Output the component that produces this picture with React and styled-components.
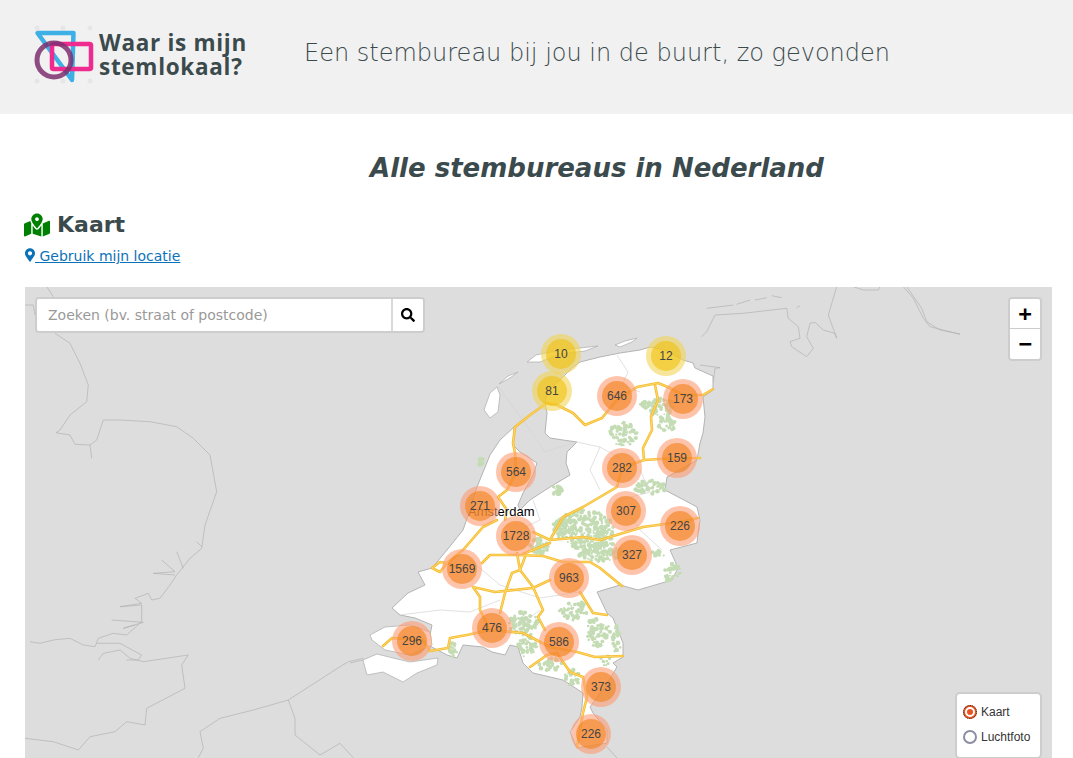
import React from 'react';
import styled, { createGlobalStyle } from 'styled-components';
import { FaMapMarkedAlt, FaMapMarkerAlt, FaSearch } from 'react-icons/fa';

const GlobalStyle = createGlobalStyle`
  html, body {
    margin: 0;
    height: 758px;
    overflow: hidden;
    background: #fff;
    font-family: "DejaVu Sans", sans-serif;
    color: #3b4a4c;
  }
`;

const Header = styled.header`
  display: flex;
  align-items: center;
  height: 114px;
  background: #f1f1f1;
  padding: 0 0 5px 30px;
  box-sizing: border-box;
`;
const Logo = styled.div`
  display: flex;
  align-items: center;
  width: 275px;
  gap: 3px;
`;
const LogoText = styled.div`
  font-family: "Open Sans", sans-serif;
  font-weight: 700;
  font-size: 22.5px;
  letter-spacing: 0.7px;
  line-height: 24px;
  color: #3b4a4c;
  white-space: nowrap;
  margin-top: 1px;
`;
const Tagline = styled.div`
  font-size: 24px;
  font-weight: 200;
  color: #3b4a4c;
  white-space: nowrap;
  margin: 0 0 4px -1px;
`;
const Content = styled.main`
  padding: 0 21px 0 25px;
`;
const Title = styled.h1`
  margin: 0;
  padding: 37px 0 0 117px;
  text-align: center;
  font-size: 26px;
  line-height: 34px;
  font-weight: bold;
  font-style: italic;
  color: #3b4a4c;
`;
const SectionTitle = styled.h2`
  display: flex;
  align-items: center;
  gap: 7px;
  margin: 24px 0 0 -1px;
  font-size: 22px;
  line-height: 32px;
  font-weight: bold;
  color: #3b4a4c;
  svg {
    color: #008000;
  }
`;
const LocationLink = styled.a`
  display: inline-block;
  margin-top: 5px;
  font-size: 14px;
  line-height: 20px;
  color: #0c72b8;
  text-decoration: underline;
  svg {
    width: 10px;
    height: 14px;
    vertical-align: -1px;
  }
`;
const MapBox = styled.div`
  position: relative;
  width: 1027px;
  height: 481px;
  margin-top: 21px;
  background: #ddd;
  overflow: hidden;
`;
const MapLayer = styled.svg`
  position: absolute;
  inset: 0;
`;
const CityLabel = styled.div`
  position: absolute;
  left: 443px;
  top: 217px;
  font-family: "Liberation Sans", sans-serif;
  font-size: 13px;
  line-height: 16px;
  color: #000;
  text-shadow: 0 0 2px #fff, 0 0 2px #fff;
`;
const Cluster = styled.div`
  position: absolute;
  width: 40px;
  height: 40px;
  margin: -20px 0 0 -20px;
  border-radius: 50%;
  display: flex;
  align-items: center;
  justify-content: center;
  background: ${(p) => (p.$mid ? 'rgba(241, 211, 87, 0.6)' : 'rgba(253, 156, 115, 0.6)')};
`;
const ClusterCore = styled.div`
  width: 30px;
  height: 30px;
  border-radius: 50%;
  text-align: center;
  font-family: "Liberation Sans", sans-serif;
  font-size: 12px;
  line-height: 30px;
  color: #444;
  background: ${(p) => (p.$mid ? 'rgba(240, 194, 12, 0.6)' : 'rgba(241, 128, 23, 0.6)')};
`;
const SearchBar = styled.div`
  position: absolute;
  left: 10px;
  top: 10px;
  display: flex;
  width: 390px;
  height: 36px;
  box-sizing: border-box;
  border: 2px solid rgba(0, 0, 0, 0.07);
  background-clip: padding-box;
  border-radius: 4px;
`;
const SearchInput = styled.input`
  width: 356px;
  box-sizing: border-box;
  border: 0;
  border-right: 2px solid #d9d9d9;
  border-radius: 2px 0 0 2px;
  padding: 0 11px;
  font-family: "DejaVu Sans", sans-serif;
  font-size: 14px;
  outline: none;
  &::placeholder {
    color: #999;
    opacity: 1;
  }
`;
const SearchButton = styled.button`
  flex: 1;
  display: flex;
  align-items: center;
  justify-content: center;
  border: 0;
  padding: 0;
  background: #fff;
  border-radius: 0 2px 2px 0;
  color: #000;
  font-size: 14px;
`;
const ZoomBar = styled.div`
  position: absolute;
  right: 10px;
  top: 10px;
  width: 30px;
  border: 2px solid rgba(0, 0, 0, 0.07);
  background-clip: padding-box;
  border-radius: 4px;
`;
const ZoomButton = styled.a`
  display: block;
  height: 30px;
  text-align: center;
  background: #fff;
  color: #000;
  font-family: "DejaVu Sans Mono", monospace;
  font-weight: bold;
  font-size: 22px;
  line-height: 30px;
  border-radius: ${(p) => (p.$first ? '2px 2px 0 0' : '0 0 2px 2px')};
  border-bottom: ${(p) => (p.$first ? '1px solid #ccc' : '0')};
  box-sizing: border-box;
`;
const LayerPanel = styled.div`
  position: absolute;
  right: 10px;
  bottom: 9px;
  width: 87px;
  height: 67px;
  box-sizing: border-box;
  display: flex;
  flex-direction: column;
  gap: 11px;
  padding: 11px 0 0 6px;
  background: #fff;
  background-clip: padding-box;
  border: 2px solid rgba(0, 0, 0, 0.07);
  border-radius: 5px;
`;
const LayerRow = styled.label`
  display: flex;
  align-items: center;
  gap: 4px;
  height: 14px;
  font-family: "Liberation Sans", sans-serif;
  font-size: 12px;
  color: #333;
`;
const Radio = styled.span`
  position: relative;
  width: 14px;
  height: 14px;
  box-sizing: border-box;
  border-radius: 50%;
  border: 2px solid ${(p) => (p.$on ? '#e9531f' : '#8d8da3')};
  outline: ${(p) => (p.$on ? '1px dotted #333' : '0')};
  outline-offset: -1px;
  background: #fff;
  &::after {
    content: '';
    display: ${(p) => (p.$on ? 'block' : 'none')};
    position: absolute;
    inset: 2px;
    border-radius: 50%;
    background: #e9531f;
  }
`;

const toPath = (pts, close) =>
  'M' + pts.map((p) => p.join(' ')).join('L') + (close ? 'Z' : '');

// coordinates below are page pixels, the svg viewBox lines them up with the map box
const mainland = [
  [514,427],[513,445],[520,452],[537,463],[533,475],[523,493],[518,505],[520,510],[530,500],[550,487],[570,475],[566,463],[567,452],[577,442],[563,440],[550,438],[545,433],[547,413],[545,403],[548,390],[560,380],[572,368],[580,362],[600,357],[620,353],[640,350],[650,347],[665,350],[683,360],[693,363],[695,368],[713,376],[713,390],[703,397],[705,417],[703,433],[700,443],[697,460],[667,477],[665,490],[697,507],[700,520],[698,533],[697,543],[670,550],[678,568],[672,580],[638,590],[620,585],[597,592],[607,613],[613,618],[623,643],[623,657],[613,663],[617,667],[606,685],[590,707],[593,713],[607,730],[607,743],[577,748],[570,732],[580,717],[582,707],[583,693],[563,680],[533,673],[523,663],[518,647],[510,645],[505,655],[492,652],[483,647],[463,645],[457,658],[447,655],[428,645],[432,625],[415,618],[400,615],[392,608],[408,593],[425,585],[418,572],[432,568],[447,550],[463,530],[470,510],[477,487],[490,455],[500,440],
];
const islands = [
  [[370,635],[385,627],[410,625],[430,632],[432,645],[410,655],[385,650],[372,640]],
  [[363,660],[377,654],[393,658],[410,662],[438,658],[437,665],[417,673],[403,682],[383,672],[367,675]],
  [[497,387],[490,393],[484,410],[490,418],[498,412],[500,395]],
  [[499,384],[508,376],[518,372],[510,378]],
  [[527,362],[536,355],[560,350],[580,348],[598,346],[585,351],[560,354],[540,362]],
  [[615,345],[625,341],[637,338],[632,342],[620,347]],
];

const zoomA = (pts) => pts.map(([x, y]) => [+(20 + x / 3).toFixed(1), +(285 + y / 3).toFixed(1)]);
const zoomB = (pts) => pts.map(([x, y]) => [+(700 + x / 3).toFixed(1), +(285 + y / 3).toFixed(1)]);

const coast = [
  ...[
    [[80,5],[100,35]],
    [[15,60],[40,60],[45,90]],
    [[105,145],[150,175],[180,235],[205,300],[200,350],[150,390],[120,435],[108,443],[150,450],[165,478],[210,480],[215,520]],
    [[210,480],[230,465],[250,405],[300,405],[390,410],[470,425],[520,460],[570,510],[590,620],[555,720],[545,790],[510,820],[470,870],[450,900],[420,940],[395,945],[385,925],[345,940],[365,955],[300,965],[365,960],[365,1010],[320,1050],[280,1045],[235,1060],[225,1085],[190,1080],[150,1060],[100,1065],[60,1075],[30,1070]],
    [[470,800],[490,850]],
    [[425,825],[465,860],[400,865],[465,870]],
    [[530,770],[545,785]],
    [[275,1005],[370,1012],[310,1030],[345,1020]],
    [[235,1125],[250,1105],[300,1095],[330,1120],[370,1130],[505,1110],[485,1140],[495,1210],[380,1270],[375,1320],[320,1310],[285,1340],[210,1355],[175,1395],[100,1370],[15,1360]],
    [[230,1075],[300,1075],[365,1110],[355,1125],[320,1125]],
    [[1030,1120],[985,1130],[960,1145],[805,1245],[700,1275],[600,1300],[540,1340],[550,1390],[535,1418]],
    [[805,1245],[825,1300],[825,1350],[900,1410],[960,1375],[1000,1418]],
  ].map(zoomA),
  ...[
    [[20,70],[60,65],[100,60]],
    [[110,58],[150,45]],
    [[165,45],[200,38]],
    [[215,32],[245,38]],
    [[5,155],[20,140],[45,90],[130,85],[260,70],[265,100],[295,125],[300,160],[270,170],[275,185],[320,215],[340,190],[320,155],[330,115],[345,112],[370,135],[405,145],[410,160],[385,90],[410,5]],
    [[290,68],[300,62]],
    [[460,5],[490,15],[535,15],[540,5]],
    [[610,5],[640,40],[670,100],[690,125],[780,148]],
    [[620,5],[665,70],[680,110],[720,135],[780,147]],
    [[0,240],[60,248],[45,250],[40,290]],
  ].map(zoomB),
  [[350,663],[363,660]],
  [[607,747],[617,758]],
  [[667,477],[697,460]],
];

const borders = [
  [[497,385],[530,430],[545,452],[577,442]],
  [[617,355],[628,372],[622,385],[640,392]],
  [[577,442],[600,447],[620,458]],
  [[600,447],[590,470],[600,490]],
  [[533,500],[540,520],[525,527]],
  [[470,560],[500,585],[540,598],[580,592]],
  [[400,615],[440,610],[470,612],[500,600]],
  [[500,640],[520,625],[540,610]],
  [[640,470],[650,492],[620,500],[640,530],[662,550]],
];

const roads = [
  [[515,427],[530,415],[547,403],[557,405],[573,413],[585,425],[602,418],[617,400],[637,387],[658,383],[670,388],[683,395],[703,395],[713,389]],
  [[515,427],[513,443],[515,453],[516,473],[507,490],[498,497],[507,510],[505,520]],
  [[655,385],[658,400],[651,417],[652,430],[643,448],[644,460]],
  [[622,468],[644,460],[660,459],[700,458]],
  [[622,468],[617,487],[583,507],[563,517],[550,540]],
  [[533,532],[550,540],[583,537],[600,540],[643,527],[680,522],[698,518]],
  [[497,520],[483,527],[463,550],[447,563],[440,562],[432,568],[440,572],[447,563]],
  [[482,563],[490,555],[517,555],[543,556],[563,562],[590,562],[600,568],[622,586]],
  [[523,554],[550,543]],
  [[517,553],[520,570],[533,587],[543,610],[538,617],[545,630]],
  [[525,557],[520,570],[512,573],[505,593],[500,613]],
  [[473,587],[495,592],[533,588],[550,580]],
  [[473,587],[480,597],[480,610],[490,630]],
  [[383,646],[392,638],[423,640],[430,651],[448,648],[450,638],[467,635],[490,630],[523,633],[550,647],[577,652],[595,657],[623,656]],
  [[530,667],[547,655],[557,653],[570,672],[583,677],[587,697],[583,713],[577,747]],
  [[580,592],[593,613],[607,615]],
  [[462,569],[447,563]],
];

// forest patches: centre x, y, radius x, y, number of specks
const forests = [
  [585,530,30,20,260],[600,552,22,10,110],[563,527,10,9,50],[540,546,10,8,45],[557,490,5,5,16],
  [650,487,16,7,55],[660,407,14,9,55],[667,423,9,8,35],[624,434,14,12,60],[643,405,6,4,14],
  [482,463,3,5,10],[672,573,9,9,30],[660,553,8,4,14],[523,623,15,11,75],[527,645,10,12,45],
  [573,610,14,10,55],[597,633,14,14,60],[617,640,4,15,24],[453,650,4,8,16],[550,664,12,7,32],
  [572,678,9,8,22],[605,660,6,6,12],
];

const makeSpecks = () => {
  let seed = 41;
  const rnd = () => {
    seed = (seed * 16807) % 2147483647;
    return seed / 2147483647;
  };
  const specks = [];
  forests.forEach(([cx, cy, rx, ry, n]) => {
    for (let i = 0; i < n; i++) {
      const a = rnd() * Math.PI * 2;
      const d = Math.sqrt(rnd());
      specks.push([cx + Math.cos(a) * d * rx, cy + Math.sin(a) * d * ry, 0.9 + rnd() * 1.5]);
    }
  });
  return specks;
};
const specks = makeSpecks();

const clusters = [
  { n: 10, x: 561, y: 354, mid: true },
  { n: 12, x: 666, y: 356, mid: true },
  { n: 81, x: 552, y: 391, mid: true },
  { n: 646, x: 617, y: 396 },
  { n: 173, x: 683, y: 399 },
  { n: 564, x: 516, y: 472 },
  { n: 282, x: 622, y: 468 },
  { n: 159, x: 677, y: 458 },
  { n: 271, x: 480, y: 506 },
  { n: 307, x: 626, y: 511 },
  { n: 226, x: 680, y: 526 },
  { n: 1728, x: 516, y: 536 },
  { n: 327, x: 632, y: 555 },
  { n: 1569, x: 462, y: 569 },
  { n: 963, x: 569, y: 578 },
  { n: 476, x: 492, y: 628 },
  { n: 586, x: 559, y: 642 },
  { n: 296, x: 412, y: 641 },
  { n: 373, x: 601, y: 687 },
  { n: 226, x: 591, y: 734 },
];

const LogoMark = () => (
  <svg width="66" height="64" viewBox="30 22 66 64">
    <g fill="#e6e6e6">
      <circle cx="37" cy="27" r="2.5" />
      <circle cx="63" cy="27" r="2.5" />
      <circle cx="90" cy="27" r="2.5" />
      <circle cx="37" cy="80" r="2.5" />
      <circle cx="63" cy="80" r="2.5" />
      <circle cx="90" cy="80" r="2.5" />
    </g>
    <path d="M37.5 32 L73.5 32 L72 79 Z" fill="none" stroke="#3fb0e6" strokeWidth="4.5" strokeLinejoin="round" />
    <rect x="52" y="43" width="39" height="25" rx="1.5" fill="none" stroke="#ef2b90" strokeWidth="4.5" />
    <circle cx="54" cy="59" r="17" fill="none" stroke="#7d2f70" strokeOpacity="0.85" strokeWidth="5" />
  </svg>
);

const NetherlandsMap = () => (
  <MapLayer width="1027" height="481" viewBox="25 287 1027 481">
    <g fill="none" stroke="#b2b2b2" strokeWidth="0.7">
      {coast.map((line, i) => (
        <path key={i} d={toPath(line)} />
      ))}
    </g>
    <path d={toPath(mainland, true)} fill="#fff" stroke="#b4b4b4" strokeWidth="1" strokeLinejoin="round" />
    {islands.map((shape, i) => (
      <path key={i} d={toPath(shape, true)} fill="#fff" stroke="#b4b4b4" strokeWidth="0.8" />
    ))}
    <g fill="#c4dcb4">
      {specks.map(([x, y, r], i) => (
        <circle key={i} cx={x.toFixed(1)} cy={y.toFixed(1)} r={r.toFixed(1)} />
      ))}
    </g>
    <g fill="none" stroke="#d4d4d4" strokeWidth="0.7">
      {borders.map((line, i) => (
        <path key={i} d={toPath(line)} />
      ))}
    </g>
    <g fill="none" strokeLinejoin="round" strokeLinecap="round">
      {roads.map((line, i) => (
        <path key={i} d={toPath(line)} stroke="#f6bb2c" strokeWidth="2.6" />
      ))}
      {roads.map((line, i) => (
        <path key={i} d={toPath(line)} stroke="#ffdf80" strokeWidth="0.8" />
      ))}
    </g>
  </MapLayer>
);

export default function App() {
  return (
    <>
      <GlobalStyle />
      <Header>
        <Logo>
          <LogoMark />
          <LogoText>
            Waar is mijn
            <br />
            stemlokaal?
          </LogoText>
        </Logo>
        <Tagline>Een stembureau bij jou in de buurt, zo gevonden</Tagline>
      </Header>
      <Content>
        <Title>Alle stembureaus in Nederland</Title>
        <SectionTitle>
          <FaMapMarkedAlt size={26} />
          Kaart
        </SectionTitle>
        <LocationLink href="#">
          <FaMapMarkerAlt /> Gebruik mijn locatie
        </LocationLink>
        <MapBox>
          <NetherlandsMap />
          <CityLabel>Amsterdam</CityLabel>
          {clusters.map((c) => (
            <Cluster key={`${c.n}-${c.x}`} $mid={c.mid} style={{ left: c.x - 25, top: c.y - 287 }}>
              <ClusterCore $mid={c.mid}>{c.n}</ClusterCore>
            </Cluster>
          ))}
          <SearchBar>
            <SearchInput placeholder="Zoeken (bv. straat of postcode)" />
            <SearchButton>
              <FaSearch />
            </SearchButton>
          </SearchBar>
          <ZoomBar>
            <ZoomButton $first>+</ZoomButton>
            <ZoomButton>−</ZoomButton>
          </ZoomBar>
          <LayerPanel>
            <LayerRow>
              <Radio $on />
              Kaart
            </LayerRow>
            <LayerRow>
              <Radio />
              Luchtfoto
            </LayerRow>
          </LayerPanel>
        </MapBox>
      </Content>
    </>
  );
}
